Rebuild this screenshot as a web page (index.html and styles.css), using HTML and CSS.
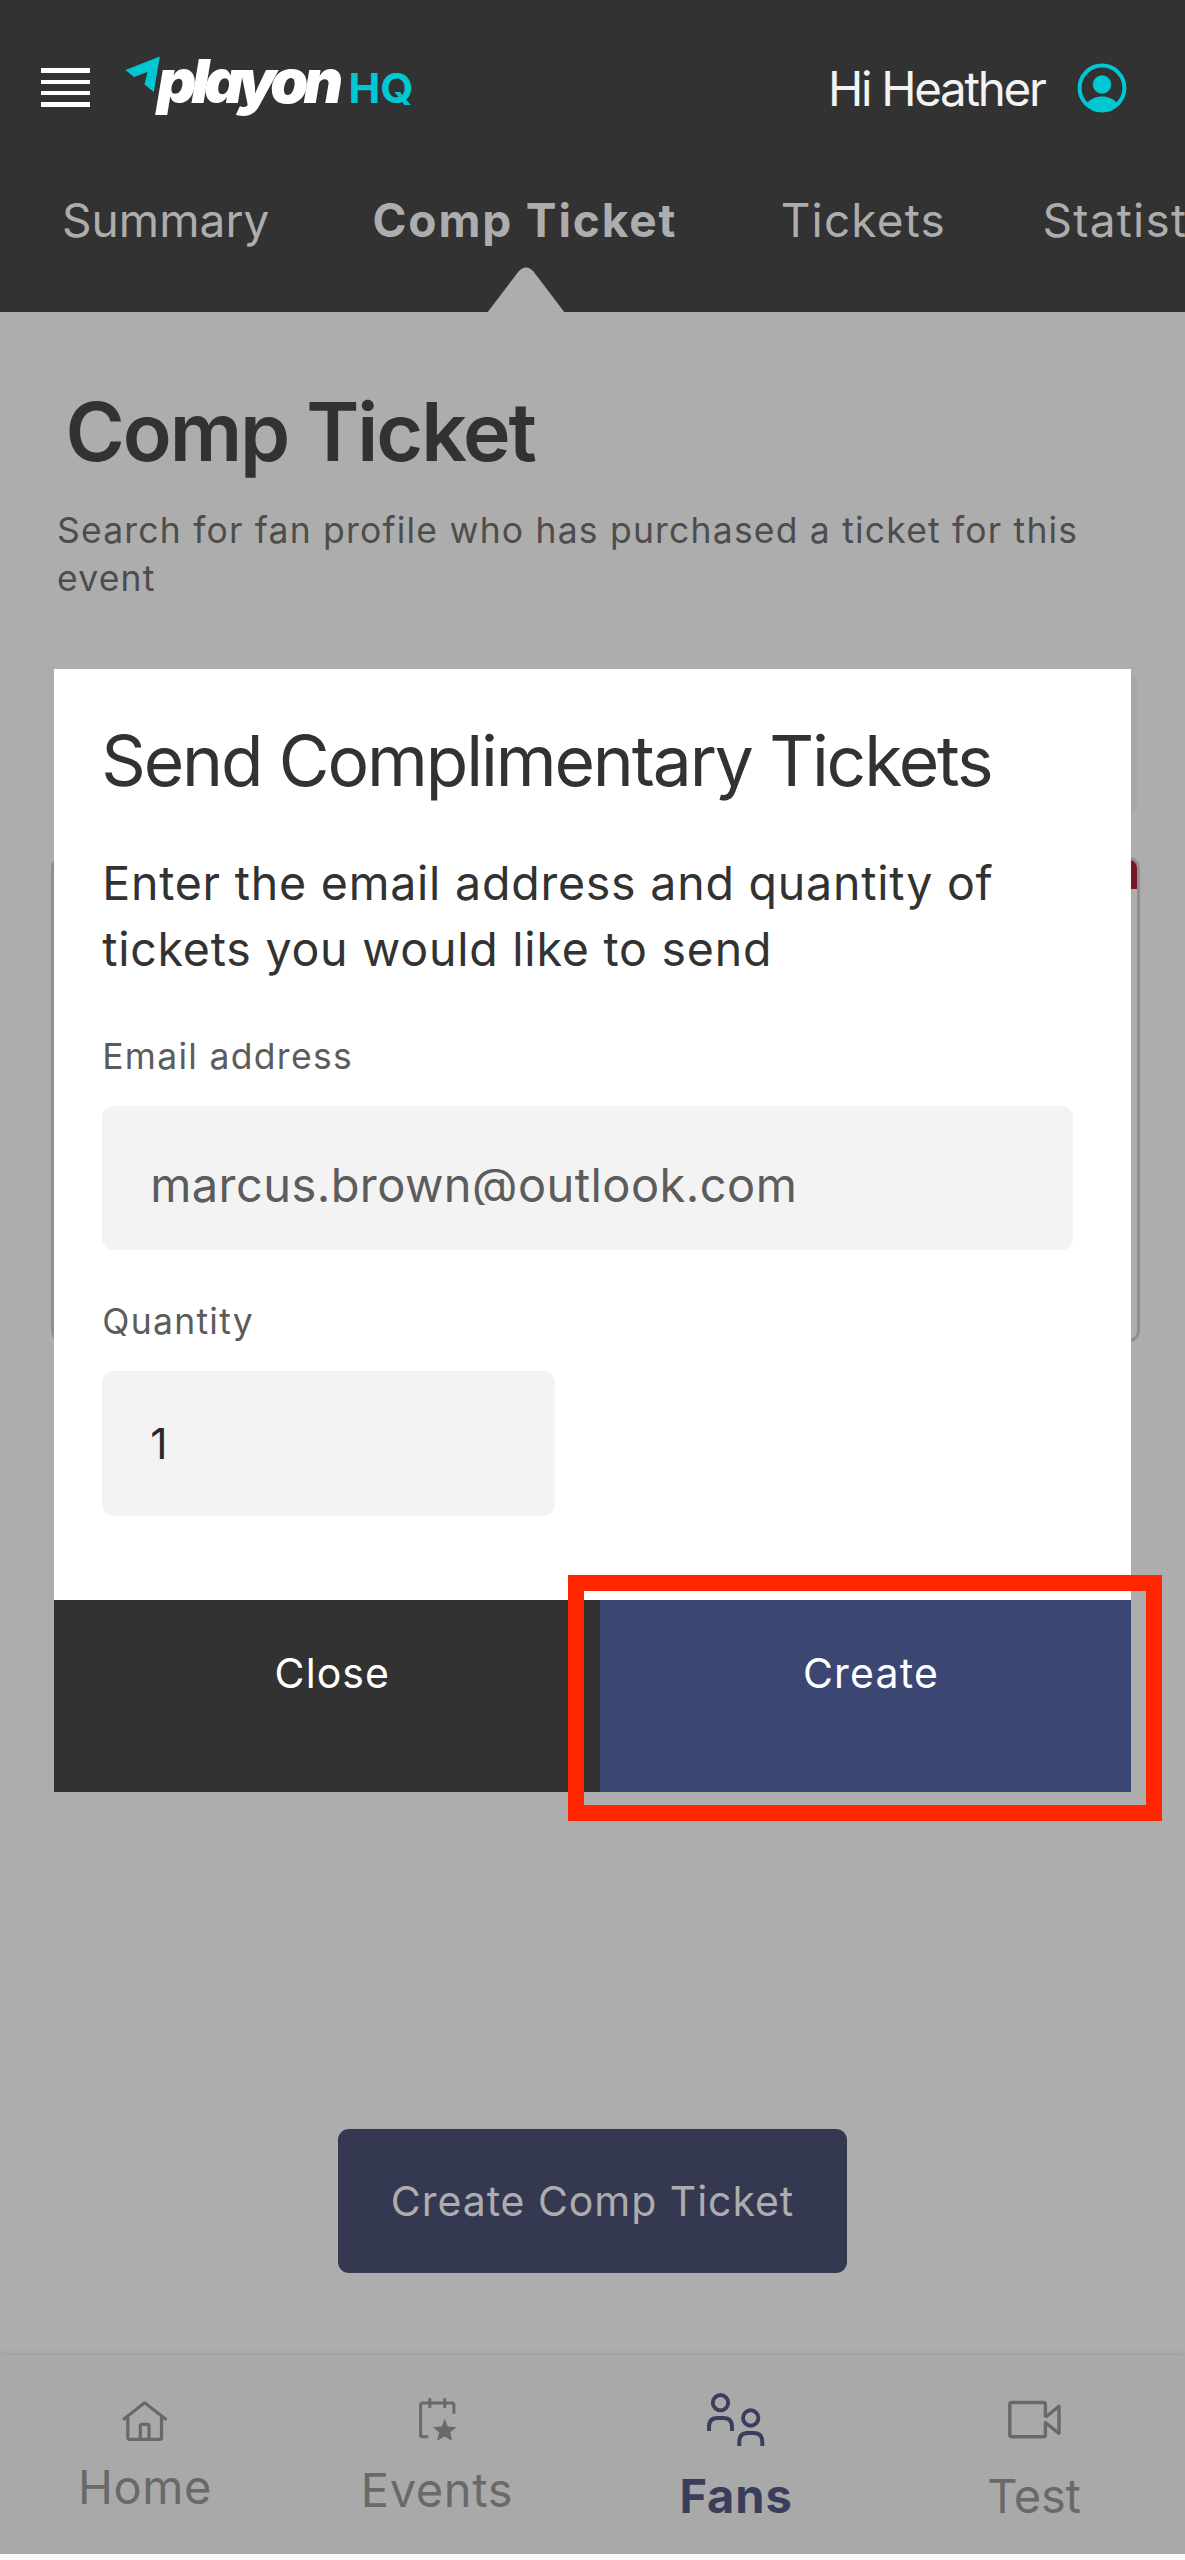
FILE: index.html
```html
<!DOCTYPE html>
<html lang="en">
<head>
<meta charset="utf-8">
<title>playon HQ - Comp Ticket</title>
<link rel="stylesheet" href="styles.css">
</head>
<body>
<div class="page">
  <header class="header">
    <div class="topbar">
      <div class="menu"><i></i><i></i><i></i><i></i></div>
      <svg class="logo" width="300" height="80" viewBox="120 47.500 300 80">
        <path d="M125.500 69.500 159.800 56 153.800 91.500 144.500 84 147.500 71.500 134 76.500z" fill="#00c8d2"/>
        <text class="logo-word" x="157" y="102" textLength="186" lengthAdjust="spacing">playon</text>
        <text class="logo-hq" x="348.500" y="102" textLength="65" lengthAdjust="spacingAndGlyphs">HQ</text>
      </svg>
      <span class="greeting">Hi Heather</span>
      <svg class="avatar" width="50" height="50" viewBox="0 0 50 50">
        <circle cx="25" cy="25" r="22.400" fill="none" stroke="#00c8d2" stroke-width="4"/>
        <circle cx="25" cy="21.500" r="9.200" fill="#00c8d2"/>
        <path d="M8.500 41.500C13 36 19 33.500 25 33.500S37 36 41.500 41.500C37 46.500 31.500 49 25 49S13 46.500 8.500 41.500z" fill="#00c8d2"/>
      </svg>
    </div>
    <nav class="tabs">
      <span class="tab tab-summary">Summary</span>
      <span class="tab tab-active">Comp Ticket
        <svg class="pointer" width="78" height="46" viewBox="0 0 78 46"><path d="M0 46 31.500 4.500Q39-3.500 46.500 4.500L78 46z" fill="#adadad"/></svg>
      </span>
      <span class="tab tab-tickets">Tickets</span>
      <span class="tab">Statistics</span>
    </nav>
  </header>

  <main class="content">
    <h1 class="title">Comp Ticket</h1>
    <p class="intro">Search for fan profile who has purchased a ticket for this event</p>
    <div class="search-panel"></div>
    <div class="fan-card"><div class="fan-card-band"></div></div>
    <button class="create-comp">Create Comp Ticket</button>
  </main>

  <nav class="bottom-nav">
    <div class="nav-item nav-home">
      <svg width="64" height="64" fill="none" stroke="currentColor" stroke-width="3.200" stroke-linejoin="round"><path d="M10 29.700 31.700 12.800 53.400 29.700M14.800 27V47.500Q14.800 49.300 16.600 49.300H46.700Q48.500 49.300 48.500 47.500V27M27.300 49V36Q27.300 34.400 28.900 34.400H34.400Q36 34.400 36 36V49"/></svg>
      <span>Home</span>
    </div>
    <div class="nav-item nav-events">
      <svg width="64" height="64" fill="none" stroke="currentColor" stroke-width="3"><path d="M23.200 46.700H17.600Q15.600 46.700 15.600 44.700V15Q15.600 13 17.600 13H46.900Q48.900 13 48.900 15V23.700M24.800 8.300V18M39.700 8.300V18"/><path d="M39.700 28.700 42.700 36.600 51.600 37.200 45.200 42.200 47 50.700 39.700 46.600 32 50.700 34.200 42.200 27.800 37.200 36.700 36.600z" fill="currentColor" stroke="none"/></svg>
      <span>Events</span>
    </div>
    <div class="nav-item nav-fans">
      <svg width="64" height="64" fill="none" stroke="currentColor" stroke-width="3.900"><circle cx="16.500" cy="12.700" r="7.700"/><circle cx="46.700" cy="28" r="7.700"/><path d="M5 41V37Q5 28 13.500 28H19.500Q28 28 28 37V41M35.300 56V52Q35.300 43 43.800 43H49.800Q58.300 43 58.300 52V56"/></svg>
      <span>Fans</span>
    </div>
    <div class="nav-item nav-test">
      <svg width="64" height="64" fill="none" stroke="currentColor" stroke-width="3.400" stroke-linejoin="round"><path d="M43.400 27.300V14.300Q43.400 12.500 41.600 12.500H9.600Q7.800 12.500 7.800 14.300V44.900Q7.800 46.700 9.600 46.700H41.600Q43.400 46.700 43.400 44.900V32.500L57 43.300V16.300L43.400 27.300"/></svg>
      <span>Test</span>
    </div>
  </nav>

  <section class="modal">
    <div class="modal-body">
      <h2 class="modal-title">Send Complimentary Tickets</h2>
      <p class="modal-text">Enter the email address and quantity of tickets you would like to send</p>
      <div class="label">Email address</div>
      <div class="field field-email"><span>marcus.brown@outlook.com</span></div>
      <div class="label label-quantity">Quantity</div>
      <div class="field field-quantity">1</div>
    </div>
    <div class="modal-actions">
      <button class="action">Close</button>
      <button class="action action-create">Create</button>
    </div>
  </section>
  <div class="highlight"></div>
</div>
</body>
</html>
```
FILE: styles.css
```css
* { box-sizing: border-box; }

body {
  margin: 0;
  background: #fafafa;
  font-family: Inter, "Liberation Sans", sans-serif;
  overflow: hidden;
}

h1, h2, p { margin: 0; }

button {
  border: 0;
  font: inherit;
  text-align: center;
}

.page {
  position: relative;
  display: flex;
  flex-direction: column;
  width: 1185px;
  height: 2553.7px;
  overflow: hidden;
  background: #adadad;
}

.header {
  flex: none;
  height: 311.5px;
  background: #323232;
}

.topbar {
  display: flex;
  align-items: center;
  height: 175px;
  padding: 0 58.5px 0 41px;
}

.menu {
  display: flex;
  flex-direction: column;
  gap: 7.200px;
  width: 49px;
}

.menu i {
  height: 4.200px;
  background: #fff;
}

.logo { margin-left: 30px; }

.logo-word {
  font: italic 900 61px Inter, sans-serif;
  fill: #fff;
}

.logo-hq {
  font: 700 41.5px Inter, sans-serif;
  fill: #00c8d2;
}

.greeting {
  margin-left: auto;
  margin-right: 32px;
  padding-top: 1px;
  color: #f3f3f3;
  font-size: 47.500px;
  letter-spacing: -2.290px;
  white-space: nowrap;
}

.tabs {
  display: flex;
  align-items: center;
  height: 89px;
  padding-left: 62px;
  color: #adadad;
  font-size: 46px;
  letter-spacing: 1.200px;
  white-space: nowrap;
}

.tab { flex: none; }

.tab-summary {
  margin-right: 103px;
  letter-spacing: 0.060px;
}

.tab-active {
  position: relative;
  margin-right: 103.500px;
  font-weight: 700;
  letter-spacing: 1.860px;
}

.pointer {
  position: absolute;
  left: 115px;
  top: 75px;
}

.tab-tickets { margin-right: 96.5px; }

.content {
  display: flex;
  flex-direction: column;
  flex: 1;
  padding-top: 71px;
}

.title {
  margin-left: 65.5px;
  color: #323232;
  font-size: 80.5px;
  font-weight: 600;
  line-height: 98px;
  letter-spacing: -2.100px;
}

.intro {
  width: 1070px;
  margin: 26.300px 0 0 57px;
  color: #4d4d4d;
  font-size: 35.5px;
  line-height: 48px;
  letter-spacing: 1.200px;
}

.search-panel {
  flex: none;
  width: 1082.500px;
  height: 141px;
  margin: 70px 0 0 54px;
  border-radius: 10px;
  background: #a6a6a6;
}

.fan-card {
  flex: none;
  width: 1088.500px;
  height: 485px;
  margin: 43px 0 0 51px;
  overflow: hidden;
  border: 3px solid #8f8f8f;
  border-radius: 11px;
}

.fan-card-band {
  width: 60px;
  height: 29px;
  margin-left: auto;
  background: #761824;
}

.create-comp {
  flex: none;
  align-self: center;
  width: 509.500px;
  height: 144.500px;
  margin-top: 787px;
  padding: 0;
  border-radius: 11px;
  background: #343850;
  color: #adadad;
  font-size: 41px;
  letter-spacing: 0.950px;
}

.bottom-nav {
  display: grid;
  flex: none;
  grid-template-columns: 290px 294px 304px 292px;
  height: 199.200px;
  padding-top: 35.5px;
  background: #a9a9a9;
  box-shadow: 0 0 6px rgba(0, 0, 0, 0.14);
  color: #696969;
  font-size: 47px;
  line-height: 60px;
}

.nav-item {
  display: flex;
  flex-direction: column;
  align-items: center;
}

.nav-item svg { overflow: visible; }

.nav-home { gap: 3px; letter-spacing: 0.570px; }
.nav-events { gap: 6px; letter-spacing: 0.630px; }
.nav-fans { gap: 12px; color: #393e5c; font-weight: 700; letter-spacing: 0.880px; }
.nav-test { gap: 12px; letter-spacing: -0.130px; }

/* The dialog floats over the dimmed page. */
.modal {
  position: absolute;
  top: 668.500px;
  left: 53.700px;
  display: flex;
  flex-direction: column;
  width: 1077.300px;
  height: 1123.300px;
}

.modal-body {
  flex: 1;
  padding: 50.5px 57.5px 0 48.5px;
  background: #fff;
}

.modal-title {
  margin-left: -1px;
  color: #323232;
  font-size: 69.5px;
  font-weight: 400;
  line-height: 84px;
  letter-spacing: -2.120px;
  white-space: nowrap;
}

.modal-text {
  width: 920px;
  margin-top: 47px;
  color: #323232;
  font-size: 46.5px;
  line-height: 66.300px;
  letter-spacing: 0.780px;
}

.label {
  margin-top: 50px;
  color: #5c5c5c;
  font-size: 35.5px;
  line-height: 48px;
  letter-spacing: 1.300px;
}

.label-quantity { margin-top: 48px; }

.field {
  display: flex;
  align-items: center;
  height: 144.5px;
  margin-top: 25px;
  padding-left: 48px;
  border-radius: 12px;
  background: #f3f3f3;
}

.field-email {
  padding-top: 13px;
  color: #5c5c5c;
  font-size: 47px;
  letter-spacing: 0.430px;
}

.field-email span {
  height: 41px;
  overflow: hidden;
  line-height: 41px;
}

.field-quantity {
  width: 452.500px;
  color: #282828;
  font-size: 42.5px;
}

.modal-actions {
  display: flex;
  height: 191.700px;
}

.action {
  flex: none;
  width: 546.300px;
  padding: 0 0 46px 11px;
  background: #323232;
  color: #fff;
  font-size: 41px;
  letter-spacing: 1.100px;
}

.action-create {
  flex: 1;
  background: #3c4672;
  letter-spacing: 1.200px;
}

/* Callout frame around the Create action. */
.highlight {
  position: absolute;
  top: 1574.500px;
  left: 568px;
  width: 593.500px;
  height: 246px;
  border: 16.500px solid #ff2600;
}
```
